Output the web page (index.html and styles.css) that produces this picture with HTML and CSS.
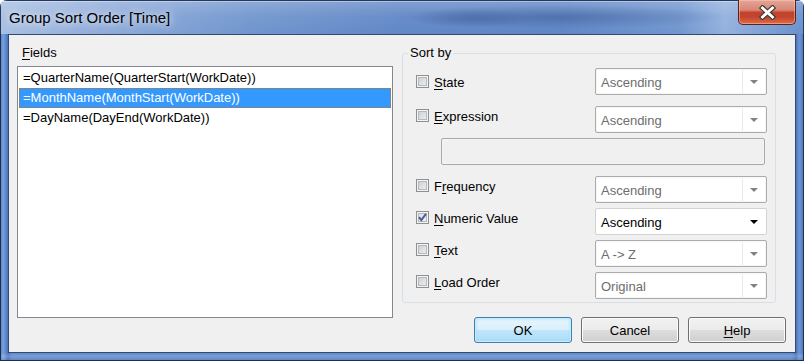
FILE: index.html
```html
<!DOCTYPE html>
<html>
<head>
<meta charset="utf-8">
<link rel="stylesheet" href="styles.css">
</head>
<body>
<div class="window">
  <div class="titlebar">
    <span class="title">Group Sort Order [Time]</span>
    <div class="close">
      <svg width="17" height="15" viewBox="0 0 17 15">
        <path d="M3.5 3 L13.5 12 M13.5 3 L3.5 12" stroke="#3c3c3c" stroke-width="5.2" stroke-linecap="square" fill="none"/>
        <path d="M3.5 3 L13.5 12 M13.5 3 L3.5 12" stroke="#ffffff" stroke-width="2.8" stroke-linecap="square" fill="none"/>
      </svg>
    </div>
  </div>
  <div class="frame">
    <div class="client">
      <div class="left">
        <div class="label"><u>F</u>ields</div>
        <div class="listbox">
          <div class="item">=QuarterName(QuarterStart(WorkDate))</div>
          <div class="item selected">=MonthName(MonthStart(WorkDate))</div>
          <div class="item">=DayName(DayEnd(WorkDate))</div>
        </div>
      </div>
      <div class="right">
        <fieldset class="group">
          <legend>Sort by</legend>
          <div class="row first">
            <div class="check"><span class="cb"></span><span class="txt"><u>S</u>tate</span></div>
            <div class="combo"><span class="val">Ascending</span><span class="arr"></span></div>
          </div>
          <div class="row sep">
            <div class="check"><span class="cb"></span><span class="txt"><u>E</u>xpression</span></div>
            <div class="combo"><span class="val">Ascending</span><span class="arr"></span></div>
          </div>
          <div class="row">
            <div class="textbox"></div>
          </div>
          <div class="row sep">
            <div class="check"><span class="cb"></span><span class="txt">F<u>r</u>equency</span></div>
            <div class="combo"><span class="val">Ascending</span><span class="arr"></span></div>
          </div>
          <div class="row">
            <div class="check"><span class="cb checked"><svg width="11" height="11" viewBox="0 0 11 11"><path d="M2 5.2 L4.3 8.2 L9 1.8" stroke="#4a5d98" stroke-width="2" fill="none"/></svg></span><span class="txt"><u>N</u>umeric Value</span></div>
            <div class="combo enabled"><span class="val">Ascending</span><span class="arr"></span></div>
          </div>
          <div class="row">
            <div class="check"><span class="cb"></span><span class="txt"><u>T</u>ext</span></div>
            <div class="combo"><span class="val">A -&gt; Z</span><span class="arr"></span></div>
          </div>
          <div class="row">
            <div class="check"><span class="cb"></span><span class="txt"><u>L</u>oad Order</span></div>
            <div class="combo"><span class="val">Original</span><span class="arr"></span></div>
          </div>
        </fieldset>
        <div class="buttons">
          <div class="btn default">OK</div>
          <div class="btn">Cancel</div>
          <div class="btn"><u>H</u>elp</div>
        </div>
      </div>
    </div>
  </div>
</div>
</body>
</html>
```
FILE: styles.css
```css
html, body {
  margin: 0;
  padding: 0;
  background: #ffffff;
}
body {
  width: 804px;
  height: 361px;
  overflow: hidden;
  font-family: "Liberation Sans", Arial, sans-serif;
  font-size: 13px;
  color: #000;
}
.window {
  width: 804px;
  height: 361px;
  border-radius: 7px 7px 0 0;
  overflow: hidden;
  display: flex;
  flex-direction: column;
  background: #5f89cc;
}
.titlebar {
  height: 34px;
  flex: none;
  display: flex;
  justify-content: space-between;
  align-items: flex-start;
  padding: 0 9px 0 9px;
  box-shadow: inset 1px 1px 0 #24395e, inset -1px 0 0 #24395e, inset 0 2px 0 rgba(255,255,255,0.35);
  background:
    radial-gradient(ellipse 170px 12px at 560px 17px, rgba(35,65,125,0.35), rgba(35,65,125,0)),
    radial-gradient(ellipse 60px 10px at 470px 18px, rgba(35,65,125,0.25), rgba(35,65,125,0)),
    linear-gradient(180deg, rgba(255,255,255,0.22) 0px, rgba(255,255,255,0.06) 16px, rgba(255,255,255,0) 34px),
    linear-gradient(90deg, #a8bfe2 0px, #8eaad9 110px, #7095cd 250px, #6187c6 400px, #5f86c5 560px, #7196cf 680px, #93b1de 725px, #7b9ed5 770px, #6a90cc 804px);
}
.title {
  margin-top: 9px;
  line-height: 18px;
  font-size: 15px;
  color: #000;
  text-shadow: 0 0 6px rgba(235,242,252,0.95), 0 0 12px rgba(235,242,252,0.8);
}
.close {
  width: 58px;
  height: 25px;
  box-sizing: border-box;
  margin-right: -1px;
  border: 1px solid #5e2018;
  border-top: none;
  border-radius: 0 0 5px 5px;
  background: linear-gradient(180deg, #e5a697 0%, #d88674 42%, #c2422c 52%, #c3452f 72%, #df6e45 100%);
  box-shadow: inset 0 0 0 1px rgba(255,210,200,0.45);
  display: flex;
  align-items: center;
  justify-content: center;
}
.close svg { display: block; }
.frame {
  flex: 1;
  padding: 0 8px 8px 8px;
  display: flex;
  background:
    linear-gradient(180deg, rgba(0,0,0,0) 0px, rgba(0,0,0,0) 319px, rgba(255,255,255,0.18) 322px, rgba(0,0,0,0.05) 327px),
    linear-gradient(90deg, #4c77bb 0px, #7aa1dc 3px, #5a86cb 6px, #4a74b8 8px, #5f89cc 12px, #5f89cc 792px, #4a74b8 796px, #6d95d4 799px, #5a85c9 802px, #3d629e 804px);
  box-shadow: inset 1px 0 0 #1d2f4f, inset -1px 0 0 #1d2f4f, inset 0 -1px 0 #1d2f4f;
}
.client {
  flex: 1;
  box-sizing: border-box;
  border: 1px solid #34496d;
  background: #f0f0f0;
  display: flex;
  gap: 9px;
  padding: 10px 9px 9px 8px;
}
.left {
  width: 376px;
  display: flex;
  flex-direction: column;
}
.label {
  line-height: 16px;
  padding-left: 5px;
}
.listbox {
  margin-top: 5px;
  height: 252px;
  box-sizing: border-box;
  border: 1px solid #828790;
  background: #fff;
  padding: 1px;
}
.item {
  height: 20px;
  box-sizing: border-box;
  line-height: 18px;
  border: 1px solid transparent;
  padding-left: 3px;
  white-space: nowrap;
}
.item.selected {
  background: #3399ff;
  color: #fff;
  border: 1px dotted #c8701e;
}
.right {
  width: 384px;
  display: flex;
  flex-direction: column;
}
.group {
  margin: 0 10px 0 0;
  width: 374px;
  box-sizing: border-box;
  border: 1px solid #d5dfe5;
  border-radius: 3px;
  padding: 7px 8px 3px 13px;
  min-width: 0;
}
.group legend {
  line-height: 16px;
  padding: 0 2px;
  margin-left: -8px;
}
.row {
  display: flex;
  justify-content: space-between;
  align-items: flex-start;
  height: 27px;
  margin-top: 5px;
}
.row.first { margin-top: 0; }
.row.sep { margin-top: 11px; }
.check {
  display: flex;
  align-items: center;
  gap: 5px;
  margin-top: 2px;
  height: 15px;
}
.row.first .check { margin-top: 6px; }
.txt {
  line-height: 15px;
  padding-top: 1px;
  white-space: nowrap;
}
.cb {
  width: 13px;
  height: 13px;
  box-sizing: border-box;
  border: 1px solid #8e8f8f;
  background: linear-gradient(135deg, #c4c8ce 0%, #dcdfe3 50%, #f3f3f3 100%);
  box-shadow: inset 0 0 0 1px #f4f4f4, inset 0 0 0 2px #b4b9bf;
  display: flex;
  align-items: center;
  justify-content: center;
}
.cb.checked {
  background: linear-gradient(135deg, #d7dbe1 0%, #e8eaed 50%, #f7f7f7 100%);
}
.cb svg { display: block; }
.combo {
  width: 172px;
  height: 27px;
  box-sizing: border-box;
  border: 1px solid #ababab;
  border-radius: 2px;
  background: #fff;
  display: flex;
  align-items: center;
  box-shadow: inset 0 0 0 1px #f6f6f6;
}
.combo .val {
  flex: 1;
  padding-left: 5px;
  padding-top: 1px;
  color: #6d6d6d;
  white-space: nowrap;
}
.combo .arr {
  width: 22px;
  height: 23px;
  margin-right: 1px;
  border-left: 1px solid #ebebeb;
  display: flex;
  align-items: center;
  justify-content: center;
}
.combo .arr::after {
  content: "";
  width: 0;
  height: 0;
  border-left: 4px solid transparent;
  border-right: 4px solid transparent;
  border-top: 4px solid #828282;
}
.combo.enabled {
  border-color: #d2d2d2;
  box-shadow: none;
}
.combo.enabled .val { color: #000; }
.combo.enabled .arr { border-left-color: transparent; }
.combo.enabled .arr::after { border-top-color: #000; }
.textbox {
  margin-left: 25px;
  width: 324px;
  height: 27px;
  box-sizing: border-box;
  border: 1px solid #a9a9a9;
  border-radius: 2px;
  background: #f0f0f0;
  box-shadow: inset 0 0 0 1px #f4f4f4;
}
.buttons {
  margin-top: 14px;
  display: flex;
  justify-content: flex-end;
  gap: 9px;
}
.btn {
  width: 98px;
  height: 26px;
  box-sizing: border-box;
  border: 1px solid #707070;
  border-radius: 3px;
  background: linear-gradient(180deg, #f2f2f2 0%, #ebebeb 48%, #dddddd 52%, #cfcfcf 100%);
  box-shadow: inset 0 0 0 1px #fbfbfb;
  display: flex;
  align-items: center;
  justify-content: center;
  line-height: 15px;
}
.btn.default {
  border-color: #3c7fb1;
  background: linear-gradient(180deg, #e9f6fd 0%, #d9f0fc 48%, #bee6fd 52%, #aedcf5 100%);
  box-shadow: inset 0 0 0 1px #c7ecfb, inset 0 0 3px 1px #9fdcf7;
}
u { text-decoration: underline; text-underline-offset: 2px; }
```
